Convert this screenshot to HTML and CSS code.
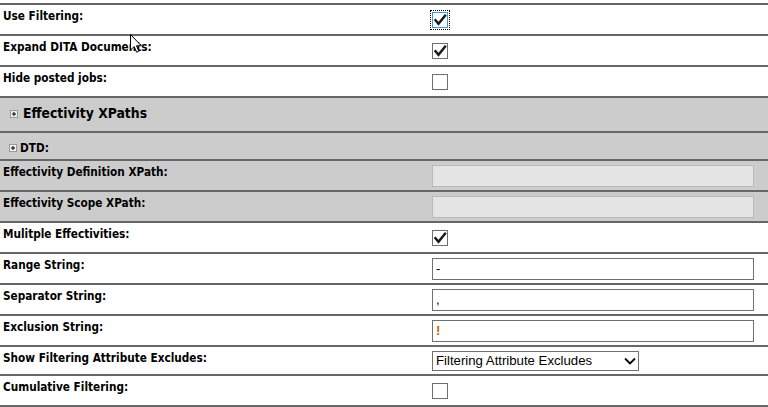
FILE: index.html
```html
<!DOCTYPE html>
<html>
<head>
<meta charset="utf-8">
<link rel="stylesheet" href="styles.css">
</head>
<body>
<div class="form">
  <div class="row">
    <div class="label">Use Filtering:</div>
    <div class="ctrl"><span class="cb checked focused"><svg viewBox="0 0 14 14" width="14" height="14"><path d="M2.5 7.2 L5.5 10.8 L12 2.8" class="tick"/></svg></span></div>
  </div>
  <div class="row">
    <div class="label">Expand DITA Documents:</div>
    <div class="ctrl"><span class="cb checked"><svg viewBox="0 0 14 14" width="14" height="14"><path d="M2.5 7.2 L5.5 10.8 L12 2.8" class="tick"/></svg></span></div>
  </div>
  <div class="row">
    <div class="label">Hide posted jobs:</div>
    <div class="ctrl"><span class="cb"></span></div>
  </div>
  <div class="row section header">
    <div class="label big"><svg class="plus" viewBox="0 0 8 8" width="8" height="8"><rect x="0.5" y="0.5" width="7" height="7" class="pbox"/><path d="M2 4 H6 M4 2 V6" class="pline"/></svg>Effectivity XPaths</div>
    <div class="ctrl"></div>
  </div>
  <div class="row section dtd">
    <div class="label sub"><svg class="plus" viewBox="0 0 8 8" width="8" height="8"><rect x="0.5" y="0.5" width="7" height="7" class="pbox"/><path d="M2 4 H6 M4 2 V6" class="pline"/></svg>DTD:</div>
    <div class="ctrl"></div>
  </div>
  <div class="row section">
    <div class="label">Effectivity Definition XPath:</div>
    <div class="ctrl"><input class="txt disabled" type="text" disabled></div>
  </div>
  <div class="row section">
    <div class="label">Effectivity Scope XPath:</div>
    <div class="ctrl"><input class="txt disabled" type="text" disabled></div>
  </div>
  <div class="row">
    <div class="label">Mulitple Effectivities:</div>
    <div class="ctrl"><span class="cb checked"><svg viewBox="0 0 14 14" width="14" height="14"><path d="M2.5 7.2 L5.5 10.8 L12 2.8" class="tick"/></svg></span></div>
  </div>
  <div class="row">
    <div class="label">Range String:</div>
    <div class="ctrl"><input class="txt" type="text" value="-"></div>
  </div>
  <div class="row">
    <div class="label">Separator String:</div>
    <div class="ctrl"><input class="txt" type="text" value=","></div>
  </div>
  <div class="row">
    <div class="label">Exclusion String:</div>
    <div class="ctrl"><input class="txt warn" type="text" value="!"></div>
  </div>
  <div class="row selrow">
    <div class="label">Show Filtering Attribute Excludes:</div>
    <div class="ctrl"><span class="selwrap"><select class="sel"><option>Filtering Attribute Excludes</option></select><svg class="chev" viewBox="0 0 12 8" width="12" height="8"><path d="M1 1.5 L6 6.5 L11 1.5"/></svg></span></div>
  </div>
  <div class="row last">
    <div class="label">Cumulative Filtering:</div>
    <div class="ctrl"><span class="cb"></span></div>
  </div>
  <svg class="cursor" viewBox="0 0 13 20" width="13" height="20"><path d="M0.5 0.5 L0.5 16 L4.2 12.6 L6.6 18.2 L8.8 17.2 L6.5 11.8 L11.3 11.8 Z"/></svg>
</div>
</body>
</html>
```

FILE: styles.css
```css
html, body {
  margin: 0;
  padding: 0;
  background: #fff;
}
.form {
  position: relative;
  padding-top: 3px;
  width: 768px;
}
.row {
  display: grid;
  grid-template-columns: 432px 1fr;
  border-top: 2px solid #676767;
  height: 31px;
  box-sizing: border-box;
  background: #fff;
}
.row.last {
  border-bottom: 2px solid #676767;
  height: 33px;
}
.row.section {
  background: #cccccc;
}
.row.header {
  height: 35px;
}
.row.dtd {
  height: 28px;
}
.row.selrow {
  height: 29px;
}
.label {
  align-self: start;
  font-family: "DejaVu Sans Condensed", "DejaVu Sans", sans-serif;
  font-weight: bold;
  font-size: 11.7px;
  line-height: 14px;
  color: #000;
  padding: 4px 0 0 3px;
  white-space: nowrap;
}
.label.big {
  font-size: 13.8px;
  line-height: 17px;
  padding: 7px 0 0 10px;
  display: flex;
  align-items: center;
}
.label.sub {
  padding: 8px 0 0 9px;
  display: flex;
  align-items: center;
}
.plus {
  flex: none;
  margin-right: 5px;
}
.label.sub .plus {
  margin-right: 3px;
}
.pbox {
  fill: #f0f0f0;
  stroke: #9a9a9a;
  stroke-width: 1;
}
.pline {
  stroke: #000;
  stroke-width: 1;
  fill: none;
}
.ctrl {
  display: flex;
  align-items: center;
}
.cb {
  width: 16px;
  height: 16px;
  box-sizing: border-box;
  border: 1px solid #707070;
  background: #fff;
  display: flex;
  align-items: center;
  justify-content: center;
}
.cb.focused {
  border-color: #3c97d8;
  outline: 1px dotted #000;
  outline-offset: 1px;
}
.tick {
  fill: none;
  stroke: #1a1a1a;
  stroke-width: 2.5;
  stroke-linecap: square;
  stroke-linejoin: miter;
}
.txt {
  width: 322px;
  height: 22px;
  box-sizing: border-box;
  margin: 0;
  border: 1px solid #707070;
  background: #fff;
  font-family: "Liberation Sans", Arial, sans-serif;
  font-size: 13px;
  color: #000;
  padding: 0 3px;
  outline: none;
}
.txt.disabled {
  background: #e4e4e4;
  border-color: #b9b9b9;
}
.txt.warn {
  color: #b86a00;
  font-weight: bold;
}
.selwrap {
  position: relative;
  display: inline-block;
  width: 207px;
  height: 20px;
}
.sel {
  -webkit-appearance: none;
  appearance: none;
  width: 207px;
  height: 20px;
  box-sizing: border-box;
  margin: 0;
  border: 1px solid #707070;
  border-radius: 0;
  background: #fff;
  font-family: "Liberation Sans", Arial, sans-serif;
  font-size: 13.2px;
  color: #000;
  padding: 0 0 0 3px;
  outline: none;
}
.chev {
  position: absolute;
  left: 192px;
  top: 6px;
  fill: none;
  stroke: #000;
  stroke-width: 1.8;
}
.cursor {
  position: absolute;
  left: 130px;
  top: 34px;
  fill: #fff;
  stroke: #000;
  stroke-width: 1;
}
```
